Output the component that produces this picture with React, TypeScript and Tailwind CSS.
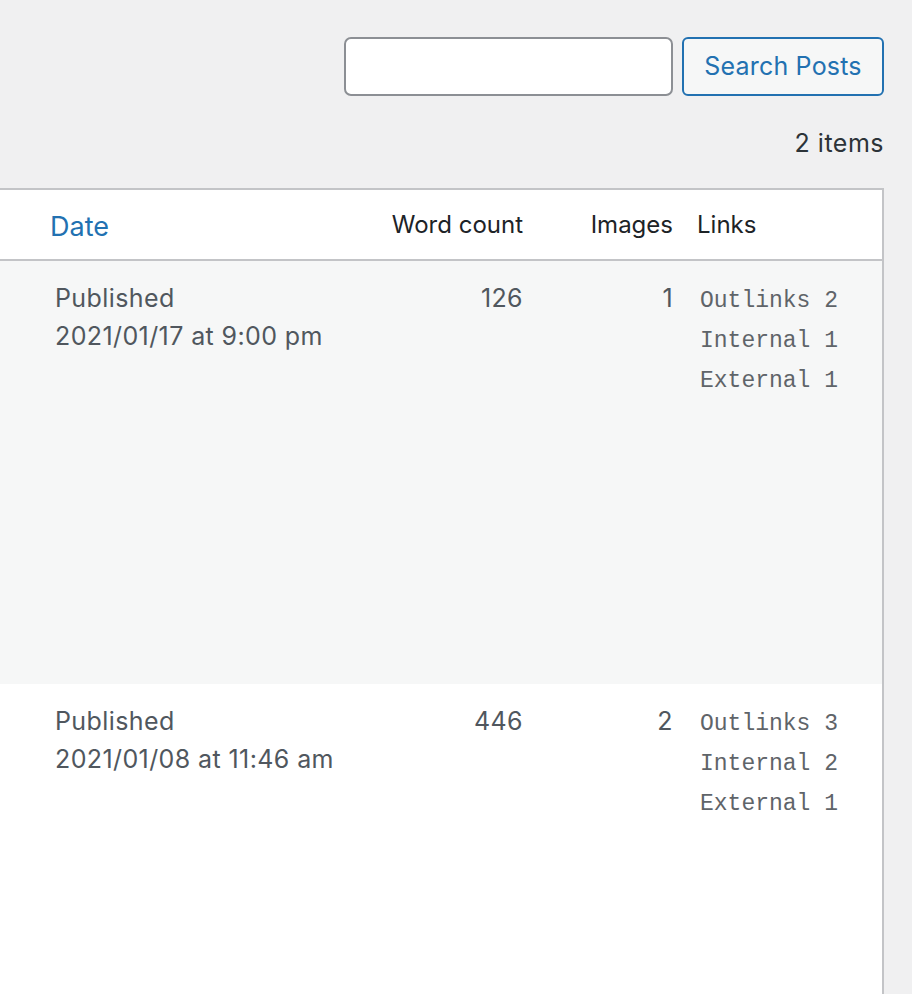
import React from "react";

const sans = { fontFamily: "Inter, 'Noto Sans', sans-serif" };

function LinksCell({ o, i, e }: { o: number; i: number; e: number }) {
  const rows: [string, number][] = [
    ["Outlinks", o],
    ["Internal", i],
    ["External", e],
  ];
  return (
    <div className="flex flex-col text-[23px] leading-[40px] text-[#5f6469] pt-[2px]" style={{ fontFamily: "'Liberation Mono', monospace" }}>
      {rows.map(([l, n]) => (
        <div key={l} className="whitespace-pre">{`${l} ${n}`}</div>
      ))}
    </div>
  );
}

function Row({ status, date, words, images, links, bg, h }: { status: string; date: string; words: number; images: number; links: [number, number, number]; bg: string; h: string }) {
  return (
    <div className={`flex ${bg} ${h} pt-[18px] text-[25px] tracking-[0.4px] leading-[38px] text-[#50575e]`}>
      <div className="w-[360px] pl-[55px]">
        <div>{status}</div>
        <div>{date}</div>
      </div>
      <div className="w-[175px] pr-[12px] text-right">{words}</div>
      <div className="w-[150px] pr-[12px] text-right">{images}</div>
      <div className="flex-1 pl-[15px] tracking-normal">
        <LinksCell o={links[0]} i={links[1]} e={links[2]} />
      </div>
    </div>
  );
}

export default function App() {
  return (
    <div className="w-[912px] h-[994px] overflow-hidden bg-[#f0f0f1]" style={sans}>
      <div className="flex justify-end gap-[9px] pt-[37px] pr-[28px]">
        <input className="w-[329px] h-[59px] rounded-[7px] border-2 border-[#8c8f94] bg-white outline-none" />
        <button className="h-[59px] w-[202px] rounded-[6px] border-2 border-[#2271b1] bg-[#f6f7f7] text-[#2271b1] text-[25px] tracking-[0.2px]">
          Search Posts
        </button>
      </div>
      <div className="pr-[28px] mt-[29px] text-right text-[25px] tracking-[0.5px] leading-[36px] text-[#2c3338]">2 items</div>
      <div className="mt-[27px] w-[884px] border-t-2 border-r-2 border-[#c3c4c7]">
        <div className="flex h-[71px] items-center bg-white border-b-2 border-[#c3c4c7] text-[24px] text-[#1d2327]">
          <div className="w-[360px] pl-[50px] text-[27px] text-[#2271b1] pt-[6px]">Date</div>
          <div className="w-[175px] pr-[12px] text-right">Word count</div>
          <div className="w-[150px] pr-[12px] text-right">Images</div>
          <div className="flex-1 pl-[12px]">Links</div>
        </div>
        <Row status="Published" date="2021/01/17 at 9:00 pm" words={126} images={1} links={[2, 1, 1]} bg="bg-[#f6f7f7]" h="h-[423px]" />
        <Row status="Published" date="2021/01/08 at 11:46 am" words={446} images={2} links={[3, 2, 1]} bg="bg-white" h="h-[400px]" />
      </div>
    </div>
  );
}
